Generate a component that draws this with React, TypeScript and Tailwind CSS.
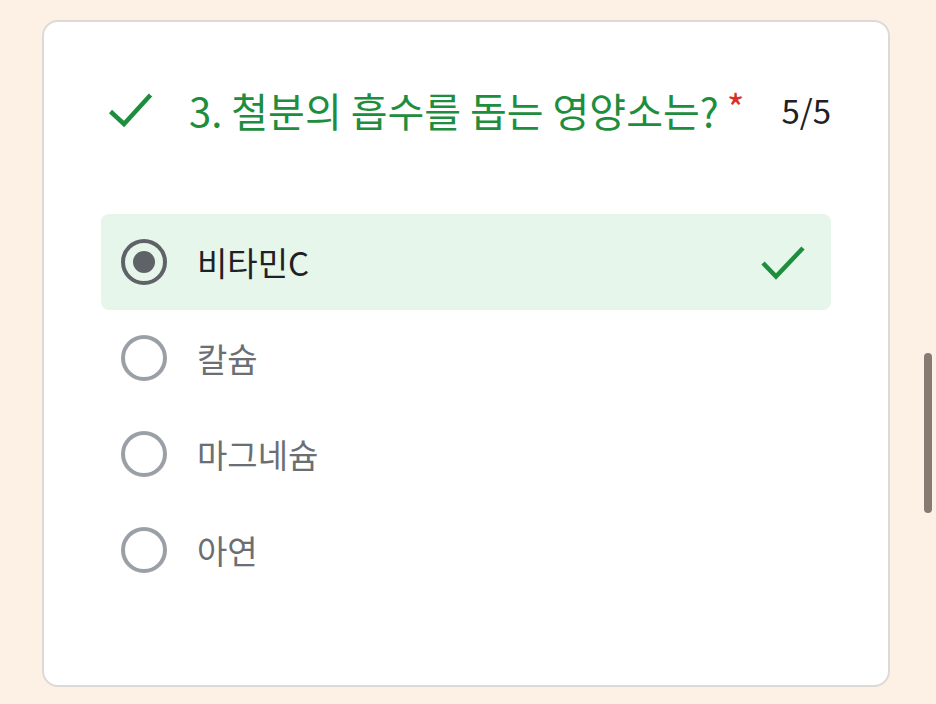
import React from 'react';

const options = [
  { label: '비타민C', checked: true },
  { label: '칼슘', checked: false },
  { label: '마그네슘', checked: false },
  { label: '아연', checked: false },
];

function Radio({ checked }: { checked: boolean }) {
  return (
    <svg width="48" height="48" viewBox="0 0 48 48" className="shrink-0">
      <circle
        cx="24"
        cy="24"
        r="21"
        fill="none"
        stroke={checked ? '#5f6368' : '#9aa0a6'}
        strokeWidth="4"
      />
      {checked && <circle cx="24" cy="24" r="11" fill="#5f6368" />}
    </svg>
  );
}

export default function App() {
  return (
    <div
      className="relative h-[704px] w-[936px] overflow-hidden bg-[#fdf0e5] pt-[20px] pl-[42px]"
      style={{ fontFamily: '"Noto Sans CJK KR", "Noto Sans", sans-serif' }}
    >
      <div className="h-[667px] w-[848px] rounded-[16px] border-2 border-[#dcd9d6] bg-white px-[57px] pt-[64px]">
        {/* question header */}
        <div className="flex h-[48px] items-center">
          <svg width="52" height="48" viewBox="0 0 52 48" className="shrink-0">
            <path
              d="M9.5 25.5 L23 38 L49.5 9"
              fill="none"
              stroke="#1e8e3e"
              strokeWidth="4.5"
            />
          </svg>
          <div className="ml-[36px] flex flex-1 items-center">
            <span className="text-[40px] leading-none text-[#1e8e3e]">3. 철분의 흡수를 돕는 영양소는?</span>
            <span className="ml-[8px] -mt-[6px] text-[38px] leading-none text-[#d93025]">*</span>
          </div>
          <span className="text-[33px] leading-none text-[#202124]">5/5</span>
        </div>

        {/* options */}
        <div className="mt-[80px] flex flex-col">
          {options.map((o) => (
            <div
              key={o.label}
              className={
                'flex h-[96px] items-center rounded-[8px] pl-[19px] pr-[24px] ' +
                (o.checked ? 'bg-[#e6f6eb]' : '')
              }
            >
              <Radio checked={o.checked} />
              <span
                className={
                  'ml-[29px] flex-1 text-[33px] leading-none ' +
                  (o.checked ? 'text-[#202124]' : 'text-[#6b6f74]')
                }
              >
                {o.label}
              </span>
              {o.checked && (
                <svg width="48" height="48" viewBox="0 0 48 48" className="shrink-0">
                  <path
                    d="M4 25 L17 38.5 L44 10"
                    fill="none"
                    stroke="#1e8e3e"
                    strokeWidth="4.5"
                  />
                </svg>
              )}
            </div>
          ))}
        </div>
      </div>

      {/* overlay scrollbar */}
      <div className="absolute top-[353px] left-[924px] h-[160px] w-[8px] rounded-full bg-[#857b72]" />
    </div>
  );
}
